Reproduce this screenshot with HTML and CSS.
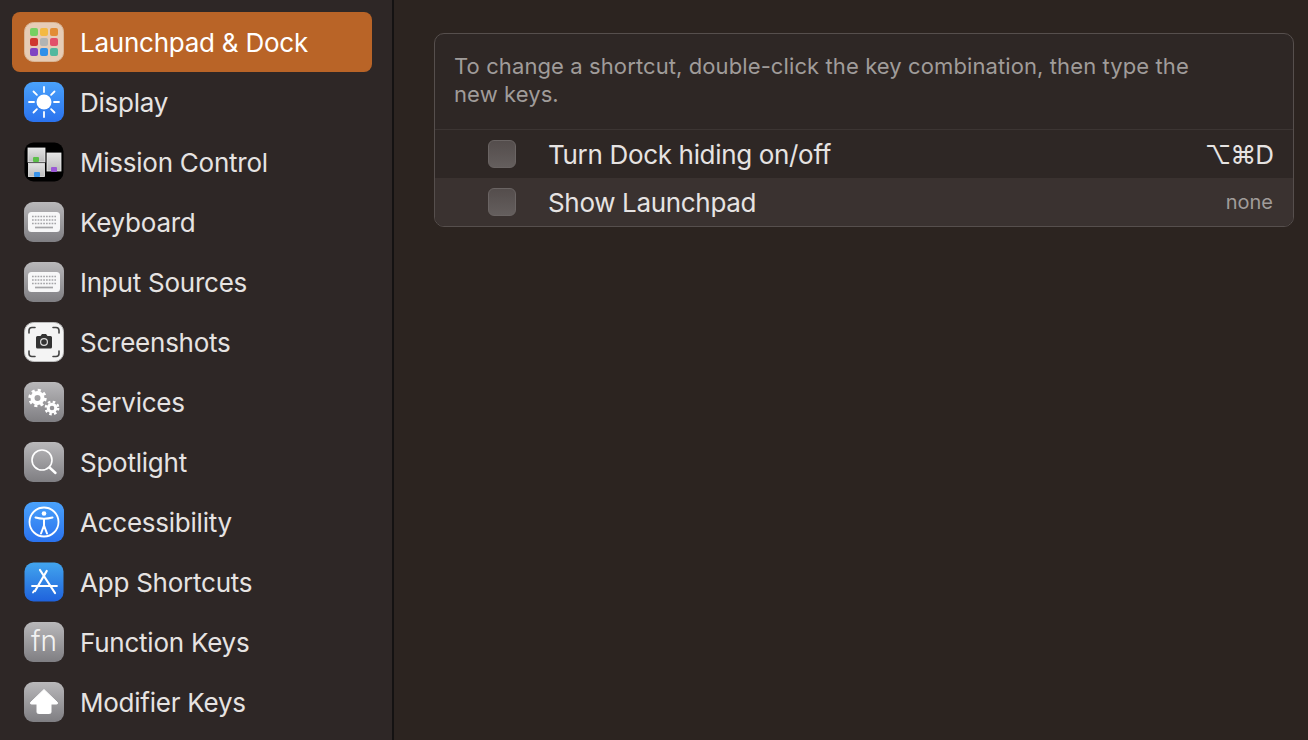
FILE: index.html
```html
<!DOCTYPE html>
<html lang="en">
<head>
    <meta charset="UTF-8">
    <title>Keyboard Shortcuts</title>
    <link rel="stylesheet" href="styles.css">
</head>
<body>

<svg class="defs" width="0" height="0" aria-hidden="true">
    <defs>
        <linearGradient id="grey" x1="0" y1="0" x2="0" y2="1"><stop offset="0" stop-color="#b9b8ba"/><stop offset="1" stop-color="#7f7e82"/></linearGradient>
        <linearGradient id="blue" x1="0" y1="0" x2="0" y2="1"><stop offset="0" stop-color="#4aa2fb"/><stop offset="1" stop-color="#2a72ee"/></linearGradient>
        <linearGradient id="appblue" x1="0" y1="0" x2="0" y2="1"><stop offset="0" stop-color="#42a5ee"/><stop offset="1" stop-color="#1f62dc"/></linearGradient>
        <linearGradient id="win" x1="0" y1="0" x2="0" y2="1"><stop offset="0" stop-color="#e4e4e4"/><stop offset="1" stop-color="#bcbcbc"/></linearGradient>
        <symbol id="keys" viewBox="0 0 40 40">
            <rect width="40" height="40" rx="9" fill="url(#grey)"/>
            <rect x="4" y="10" width="32" height="20" rx="3.5" fill="#f7f7f8"/>
            <path d="M8 14.500h24M8 18h24M8 21.500h24" stroke="#a5a5a8" stroke-width="1.700" stroke-dasharray="1.700 1.100"/>
            <path d="M11 25.500h18" stroke="#a5a5a8" stroke-width="1.700"/>
        </symbol>
    </defs>
</svg>

<div class="window">
    <nav class="sidebar">
        <a class="nav-item active">
            <svg class="icon" viewBox="0 0 40 40">
                <rect x=".5" y=".5" width="39" height="39" rx="9" fill="#e6ccb6" stroke="#d9b595"/>
                <rect x="6" y="6" width="8" height="8" rx="2" fill="#76d062"/><rect x="16" y="6" width="8" height="8" rx="2" fill="#f4b942"/><rect x="26" y="6" width="8" height="8" rx="2" fill="#e28c35"/>
                <rect x="6" y="16" width="8" height="8" rx="2" fill="#cf382e"/><rect x="16" y="16" width="8" height="8" rx="2" fill="#b2b4b3"/><rect x="26" y="16" width="8" height="8" rx="2" fill="#e2506a"/>
                <rect x="6" y="26" width="8" height="8" rx="2" fill="#8042c2"/><rect x="16" y="26" width="8" height="8" rx="2" fill="#2f8fe8"/><rect x="26" y="26" width="8" height="8" rx="2" fill="#52b89e"/>
            </svg>
            <span>Launchpad &amp; Dock</span>
        </a>
        <a class="nav-item">
            <svg class="icon" viewBox="0 0 40 40">
                <rect width="40" height="40" rx="9" fill="url(#blue)"/>
                <circle cx="20" cy="20" r="7.500" fill="#fff"/>
                <path d="M20 5v5M20 30v5M5 20h5M30 20h5M9.500 9.500l3.400 3.400M27.100 27.100l3.400 3.400M9.500 30.500l3.400-3.400M27.100 12.900l3.400-3.400" stroke="#fff" stroke-width="1.800" stroke-linecap="round"/>
            </svg>
            <span>Display</span>
        </a>
        <a class="nav-item">
            <svg class="icon" viewBox="0 0 40 40">
                <rect x=".5" y=".5" width="39" height="39" rx="9" fill="#000"/>
                <rect x="4" y="6" width="17" height="14" fill="url(#win)" stroke="#eee" stroke-width=".8"/>
                <rect x="23" y="11" width="14" height="18" fill="url(#win)" stroke="#eee" stroke-width=".8"/>
                <rect x="4.500" y="21.500" width="16" height="13" fill="url(#win)" stroke="#eee" stroke-width=".8"/>
                <rect x="9" y="15" width="6" height="5" rx="1" fill="#5cc04a"/>
                <rect x="27" y="25" width="6" height="5" rx="1" fill="#9b59d6"/>
                <rect x="10" y="30" width="6" height="5" rx="1" fill="#3a94ea"/>
            </svg>
            <span>Mission Control</span>
        </a>
        <a class="nav-item"><svg class="icon" viewBox="0 0 40 40"><use href="#keys"/></svg><span>Keyboard</span></a>
        <a class="nav-item"><svg class="icon" viewBox="0 0 40 40"><use href="#keys"/></svg><span>Input Sources</span></a>
        <a class="nav-item">
            <svg class="icon" viewBox="0 0 40 40">
                <rect x=".5" y=".5" width="39" height="39" rx="9" fill="#f4f4f4" stroke="#bbb"/>
                <path d="M5 11V8.500A3 3 0 0 1 8 5.500h3M29 5.500h3a3 3 0 0 1 3 3V11M35 29v2.500a3 3 0 0 1-3 3h-3M11 34.500H8a3 3 0 0 1-3-3V29" fill="none" stroke="#444" stroke-width="1.600" stroke-linecap="round"/>
                <path d="M13.500 14h3l1.500-2h4l1.500 2h3a1.500 1.500 0 0 1 1.500 1.500V25a1.500 1.500 0 0 1-1.500 1.500h-13A1.500 1.500 0 0 1 12 25v-9.500a1.500 1.500 0 0 1 1.500-1.500z" fill="#333"/>
                <circle cx="20" cy="20" r="3.400" fill="none" stroke="#ddd" stroke-width="1.200"/>
            </svg>
            <span>Screenshots</span>
        </a>
        <a class="nav-item">
            <svg class="icon" viewBox="0 0 40 40">
                <rect width="40" height="40" rx="9" fill="url(#grey)"/>
                <circle cx="13.500" cy="16" r="5" fill="none" stroke="#fff" stroke-width="4"/>
                <circle cx="13.500" cy="16" r="7.800" fill="none" stroke="#fff" stroke-width="2.800" stroke-dasharray="3.100 3.020"/>
                <circle cx="28" cy="26" r="3.800" fill="none" stroke="#fff" stroke-width="3"/>
                <circle cx="28" cy="26" r="6.200" fill="none" stroke="#fff" stroke-width="2.400" stroke-dasharray="2.500 2.370"/>
            </svg>
            <span>Services</span>
        </a>
        <a class="nav-item">
            <svg class="icon" viewBox="0 0 40 40">
                <rect width="40" height="40" rx="9" fill="url(#grey)"/>
                <circle cx="18" cy="18" r="10" fill="none" stroke="#fff" stroke-width="1.600"/>
                <path d="M25.500 25.500l6 5.500" stroke="#fff" stroke-width="2.400" stroke-linecap="round"/>
            </svg>
            <span>Spotlight</span>
        </a>
        <a class="nav-item">
            <svg class="icon" viewBox="0 0 40 40">
                <rect width="40" height="40" rx="9" fill="url(#blue)"/>
                <circle cx="20" cy="20" r="14.500" fill="none" stroke="#fff" stroke-width="1.800"/>
                <circle cx="20" cy="11.500" r="2.300" fill="#fff"/>
                <path d="M11.500 15.500c5.500 1.500 11.500 1.500 17 0M20 17v7M20 23.500l-3 8M20 23.500l3 8" fill="none" stroke="#fff" stroke-width="2" stroke-linecap="round"/>
            </svg>
            <span>Accessibility</span>
        </a>
        <a class="nav-item">
            <svg class="icon" viewBox="0 0 40 40">
                <rect x=".5" y=".5" width="39" height="39" rx="9" fill="url(#appblue)"/>
                <path d="M22.700 9L11 29M16 8l15 23" fill="none" stroke="#fff" stroke-width="2.200" stroke-linecap="round"/>
                <path d="M8 24h25M9 30.500l1-1.500" fill="none" stroke="#fff" stroke-width="1.800" stroke-linecap="round"/>
            </svg>
            <span>App Shortcuts</span>
        </a>
        <a class="nav-item">
            <svg class="icon" viewBox="0 0 40 40">
                <rect width="40" height="40" rx="9" fill="url(#grey)"/>
                <text class="fn-text" x="20" y="29" text-anchor="middle">fn</text>
            </svg>
            <span>Function Keys</span>
        </a>
        <a class="nav-item">
            <svg class="icon" viewBox="0 0 40 40">
                <rect width="40" height="40" rx="9" fill="url(#grey)"/>
                <path d="M20 7.500L6.500 20.500Q6 22 7.500 22H13v8q0 1.500 1.500 1.500h11q1.500 0 1.500-1.500v-8h5.500q1.500 0 1-1.500z" fill="#fff" stroke="#fff" stroke-linejoin="round"/>
            </svg>
            <span>Modifier Keys</span>
        </a>
    </nav>

    <main class="content">
        <section class="panel">
            <p class="hint">To change a shortcut, double-click the key combination, then type the new keys.</p>
            <div class="shortcut-row">
                <span class="check"></span>
                <span class="shortcut-name">Turn Dock hiding on/off</span>
                <span class="keys">⌥⌘D</span>
            </div>
            <div class="shortcut-row alt">
                <span class="check"></span>
                <span class="shortcut-name">Show Launchpad</span>
                <span class="keys none">none</span>
            </div>
        </section>
    </main>
</div>

</body>
</html>
```

FILE: styles.css
```css
html, body { margin: 0; height: 100%; overflow: hidden; }
body { font-family: Inter, "Noto Sans", "DejaVu Sans", sans-serif; background: #2c2420; color: #e6e3e2; }
.defs { display: block; height: 0; }
.window { display: flex; height: 740px; }

.sidebar { width: 394px; flex: none; box-sizing: border-box; padding: 12px 20px 0 12px; background: #2e2726; border-right: 2px solid #141212; }
.nav-item { display: flex; align-items: center; gap: 16px; height: 60px; padding-left: 12px; border-radius: 8px; font-size: 26px; font-weight: 420; letter-spacing: -0.24px; color: #e6e3e2; }
.nav-item.active { background: #b96427; color: #fff; }
.icon { width: 40px; height: 40px; flex: none; }
.fn-text { font-family: Inter, sans-serif; font-weight: 300; font-size: 28px; letter-spacing: 0; fill: #f2f2f2; }

.content { flex: 1; padding: 33px 14px 0 40px; }
.panel { border: 1px solid #564f4d; border-radius: 10px; overflow: hidden; background: #2e2725; }
.hint { margin: 0; padding: 18px 90px 21px 19px; font-size: 22px; font-weight: 420; letter-spacing: 0.1px; line-height: 28px; color: #a09c9a; border-bottom: 1px solid #3c3533; }
.shortcut-row { display: flex; align-items: center; height: 48px; padding: 0 20px 0 52px; font-size: 26px; font-weight: 420; letter-spacing: -0.33px; }
.shortcut-row.alt { background: #3a3230; }
.check { width: 28px; height: 28px; box-sizing: border-box; border-radius: 6px; background: linear-gradient(#544d4c, #645e5d); border: 1px solid #6a6463; margin: 0 32px 0 1px; }
.shortcut-name { flex: 1; }
.keys { font-size: 26px; letter-spacing: -1px; color: #e6e3e2; }
.keys.none { font-size: 20px; color: #a09c9a; letter-spacing: 0; }
```
